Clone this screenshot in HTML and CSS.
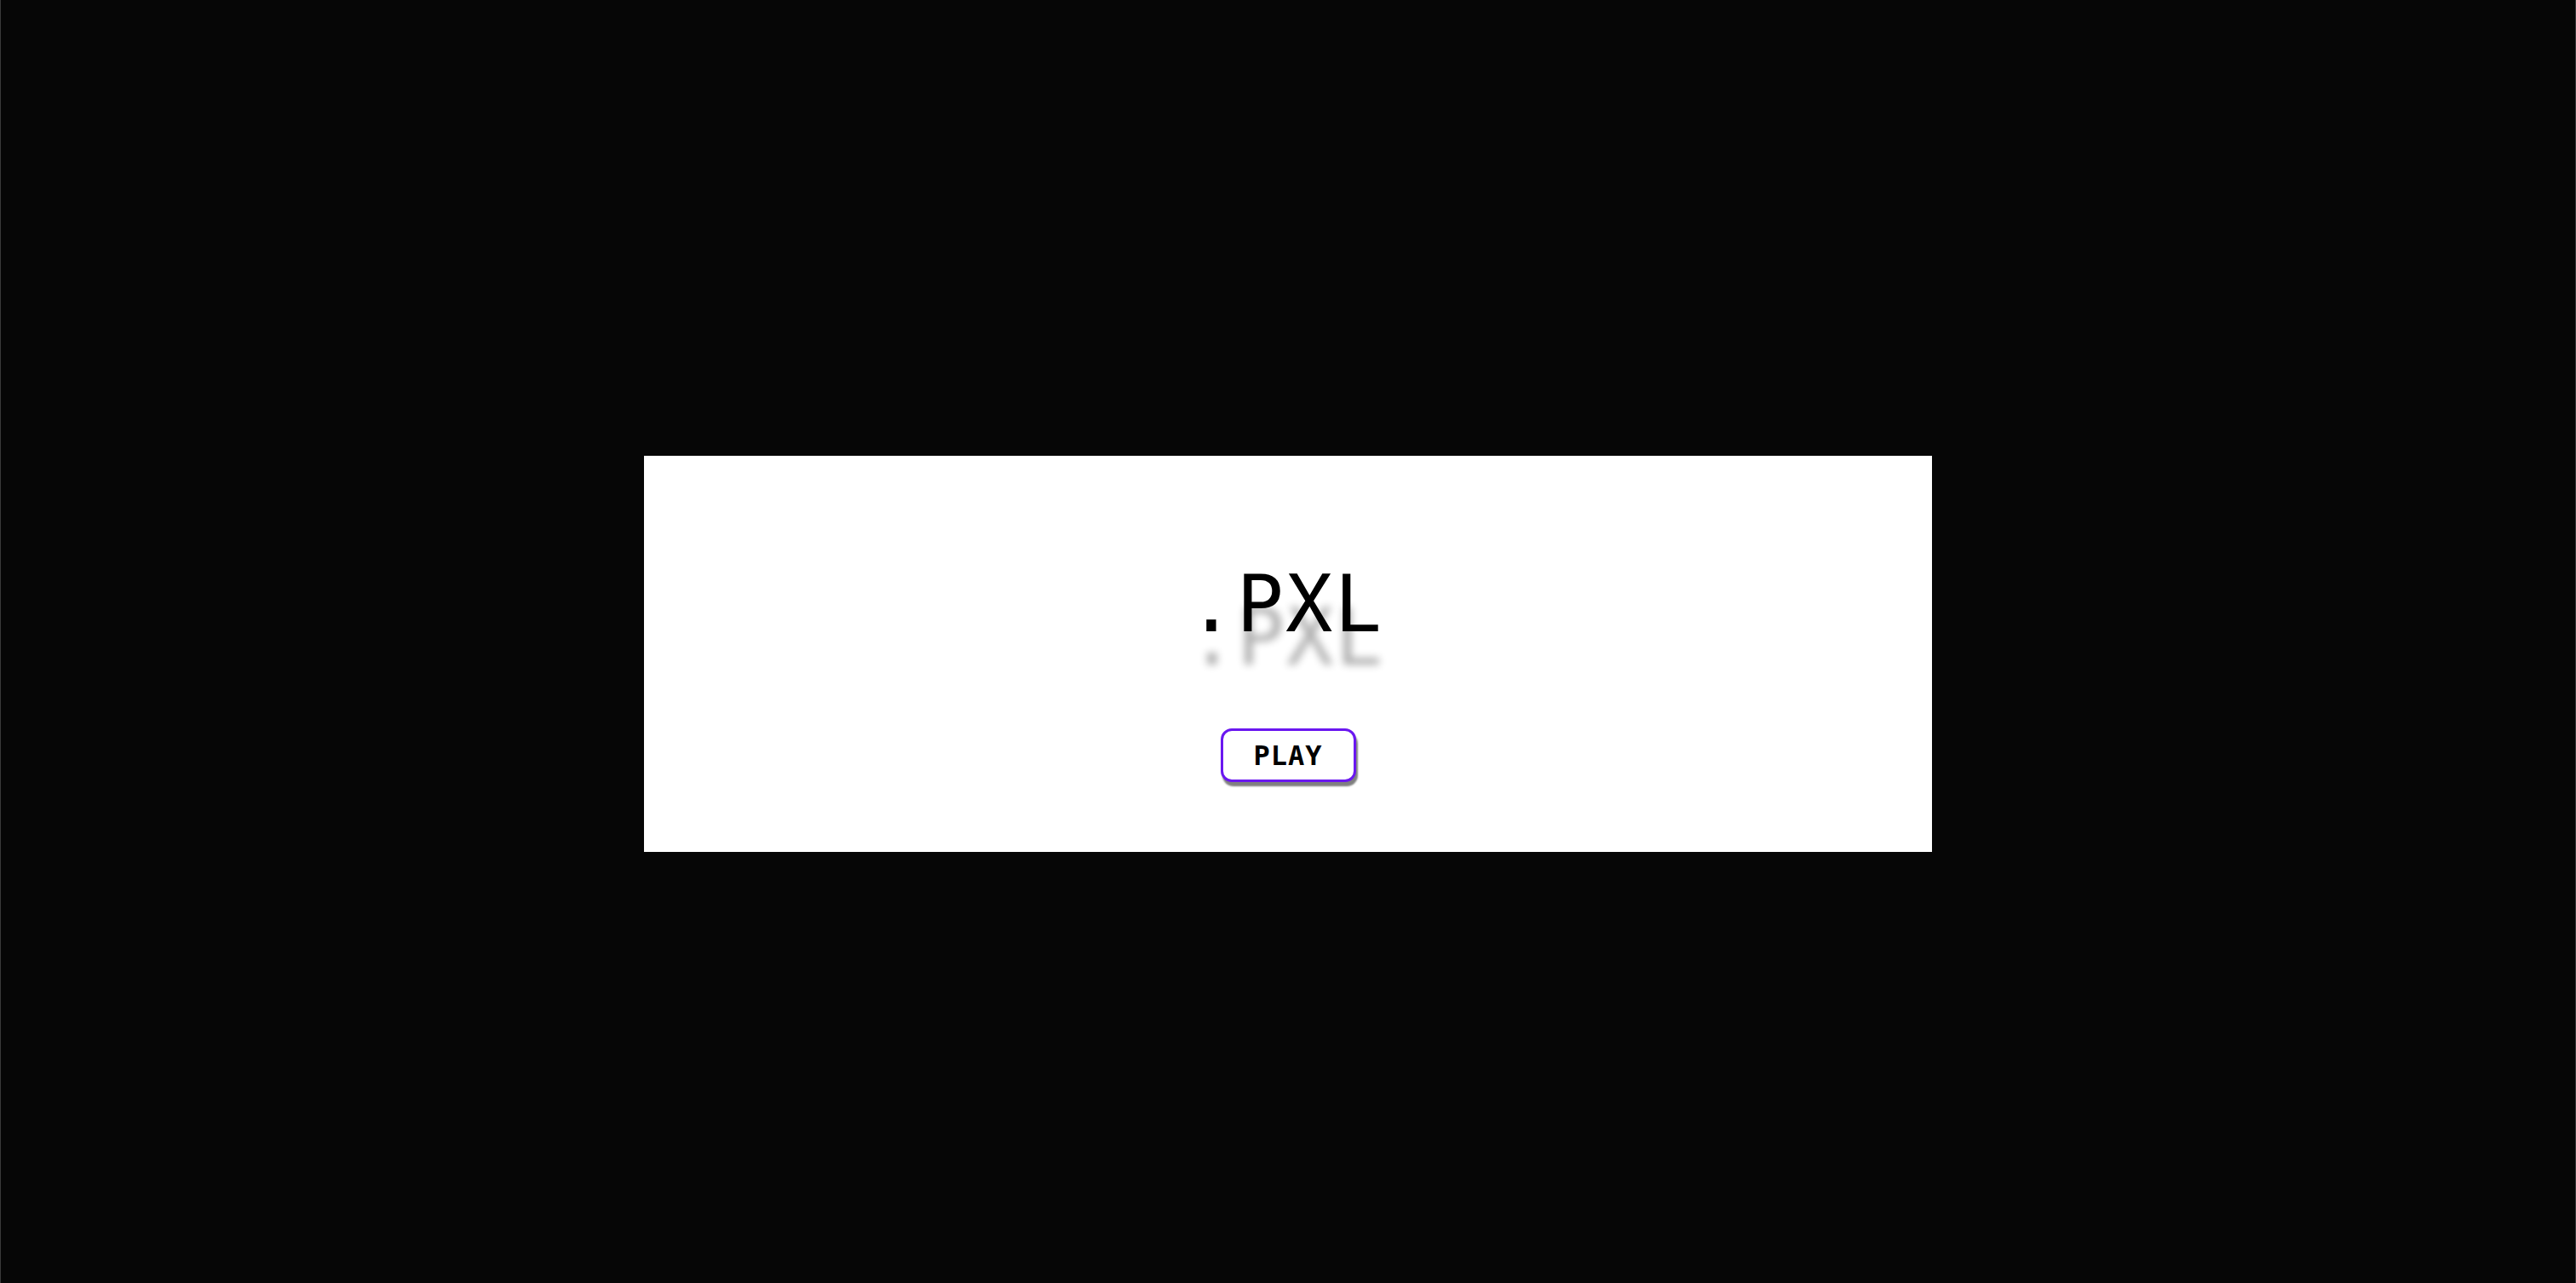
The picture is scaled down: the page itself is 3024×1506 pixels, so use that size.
FILE: index.html
```html
<!DOCTYPE html>
<html lang="en">
<head>
<meta charset="utf-8">
<title>.PXL</title>
<link rel="stylesheet" href="styles.css">
</head>
<body>
<main class="stage">
  <section class="panel">
    <h1 class="title">.PXL</h1>
    <button class="play">PLAY</button>
  </section>
</main>
</body>
</html>
```
FILE: styles.css
```css
html, body {
  margin: 0;
  padding: 0;
  height: 100%;
}
body {
  background: #060606;
  border-left: 1px solid #3a3a3a;
  border-right: 1px solid #3a3a3a;
  box-sizing: border-box;
}
.stage {
  height: 100%;
  display: flex;
  justify-content: center;
  align-items: flex-start;
  padding-top: 535px;
  box-sizing: border-box;
}
.panel {
  width: 1512px;
  height: 465px;
  background: #ffffff;
  display: flex;
  flex-direction: column;
  align-items: center;
  box-sizing: border-box;
  padding-top: 129px;
}
.title {
  margin: 0;
  font-family: "DejaVu Sans Mono", monospace;
  font-weight: normal;
  font-size: 92px;
  line-height: 1;
  letter-spacing: 2px;
  padding-left: 2px;
  margin-right: 8px;
  color: #000;
  text-shadow: 1px 39px 10px rgba(0, 0, 0, 0.32);
}
.play {
  margin-top: 99px;
  width: 159px;
  height: 63px;
  background: #fff;
  border: 3px solid #6a17f0;
  border-radius: 13px;
  box-shadow: 2px 5px 2px rgba(0, 0, 0, 0.5);
  font-family: "DejaVu Sans Mono", monospace;
  font-weight: bold;
  font-size: 32px;
  letter-spacing: 1px;
  color: #000;
  padding: 0;
  cursor: pointer;
}
```
